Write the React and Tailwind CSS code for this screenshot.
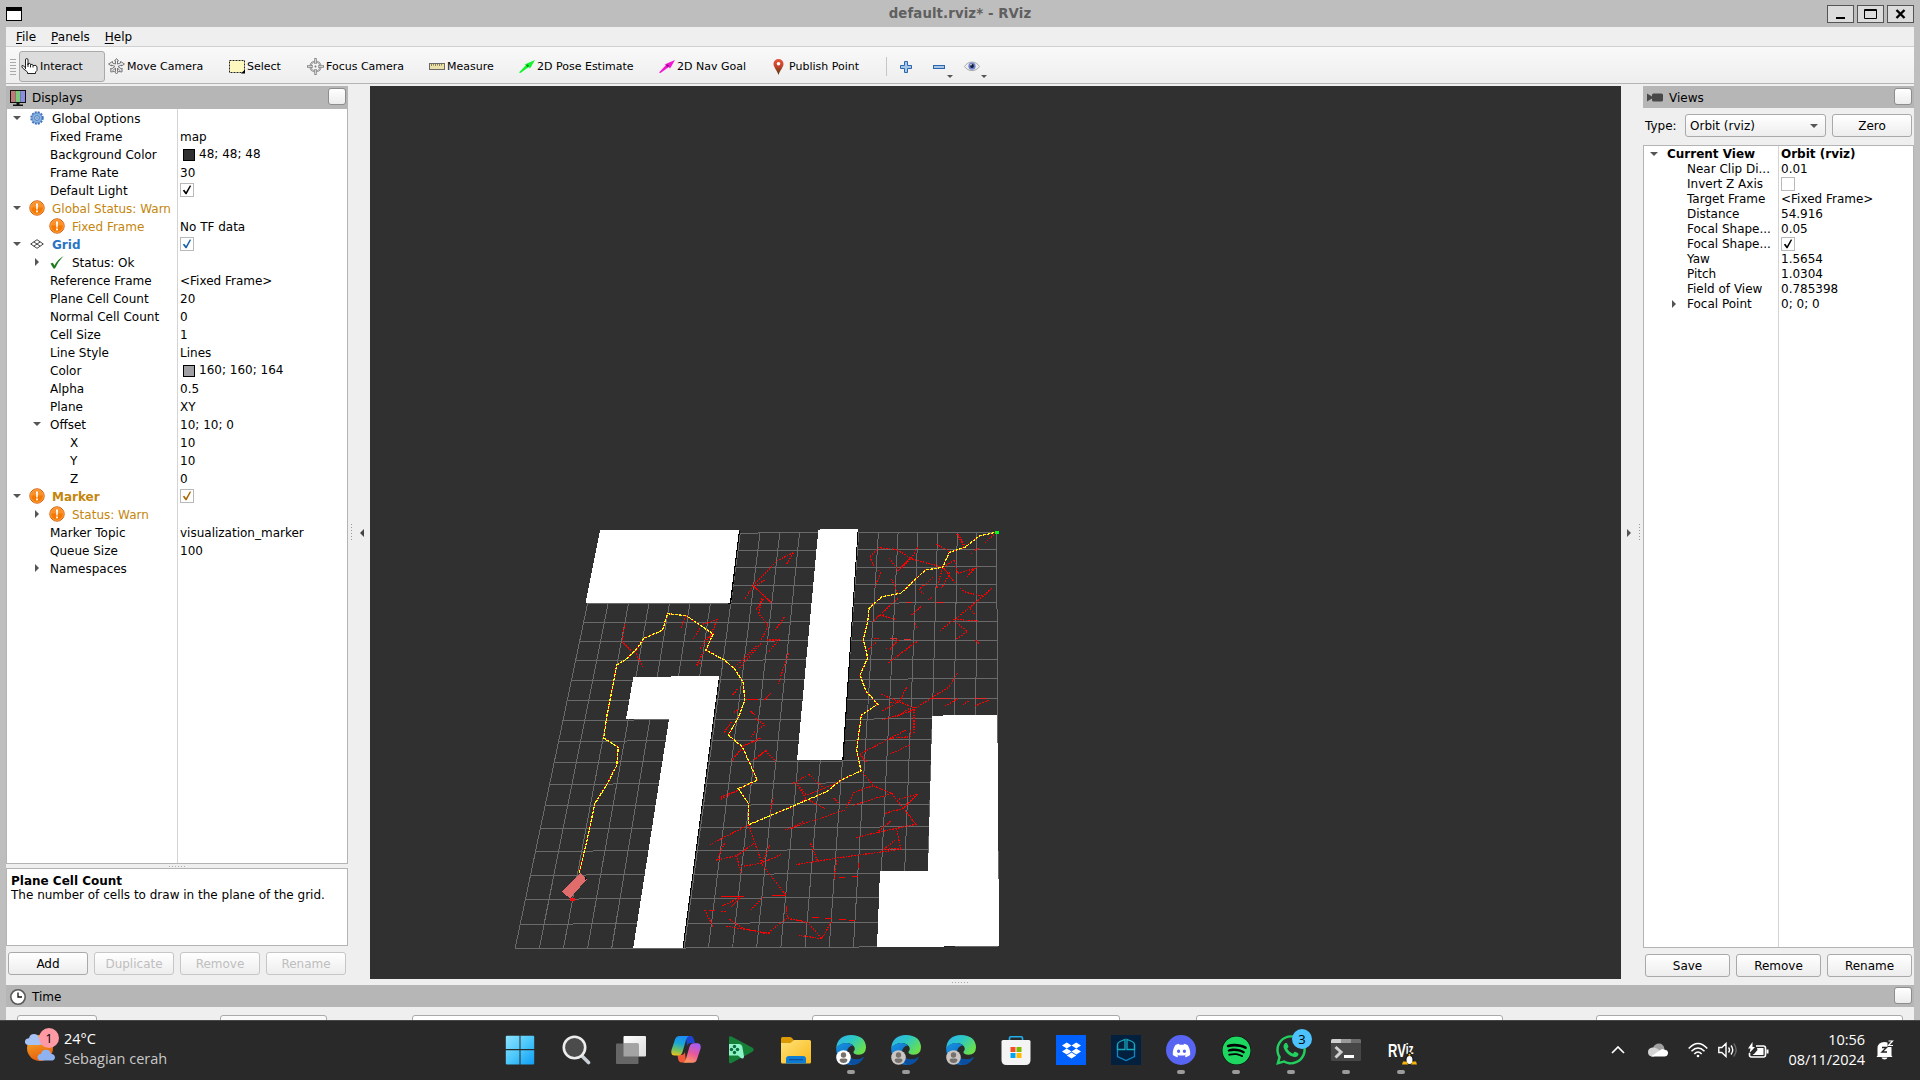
import React from "react";
import { FaDiscord, FaSpotify, FaDropbox, FaWhatsapp } from "react-icons/fa";

/* ---------- small icons ---------- */

const Hand = () => (
  <svg width="17" height="17" viewBox="0 0 17 17" fill="#fff" stroke="#222" strokeWidth="1">
    <path d="M4.500 11V2q0-1.500 1.200-1.500T7 2v5V5.500q2.500-.8 2.500 1 2.500-.8 2.500 1 4-1 4 1.500v3.500L14.500 14v1.500h-8V14L1.500 10Q.5 8.500 1 7.500 2.500 7 4.500 10z" />
    <path d="M9.500 6.500v3M12 7.500v2M7 6v3" fill="none" />
  </svg>
);
const MoveCam = () => (
  <svg width="17" height="17" viewBox="0 0 17 17" fill="#eee" stroke="#777" strokeWidth="1">
    <path d="M8.500.5l2 2.500H9.500v3l3-1V3.500l4 2.500-3 2v-1l-3.500 1.500 3.500 2.500.5-1v4l-3-.5.800-1L9.500 10v3.500h1l-2 2.500-2-2.500h1V10l-2.500 2.500.8 1-3 .5V10l.800 1L7 8.500 3.500 7v1l-3-2 4-2.500V5l3 1V3h-1z" />
  </svg>
);
const SelectIcon = () => (
  <svg width="16" height="14" viewBox="0 0 16 14">
    <rect x=".5" y=".5" width="15" height="12" fill="#fdf8bd" stroke="#222" strokeDasharray="2 1" />
    <path d="M16 9.500v4h-4z" fill="#000" />
  </svg>
);
const FocusIcon = () => (
  <svg width="17" height="17" viewBox="0 0 17 17" fill="none" stroke="#888">
    <circle cx="8.500" cy="8.500" r="5" strokeWidth="2.200" />
    <circle cx="8.500" cy="8.500" r="5" stroke="#ddd" strokeWidth=".7" />
    <path d="M8.500 0v6M8.500 11v6M0 8.500h6M11 8.500h6" strokeWidth="2.400" />
    <path d="M8.500 1v4.500M8.500 11.500V16M1 8.500h4.500M11.500 8.500H16" stroke="#e4e4e4" strokeWidth=".8" />
    <circle cx="8.500" cy="8.500" r="1" fill="#777" stroke="none" />
  </svg>
);
const Ruler = () => (
  <svg width="16" height="7" viewBox="0 0 16 7">
    <rect x=".5" y=".5" width="15" height="6" fill="#eae0a8" stroke="#6a6a6a" />
    <path d="M2.500 1v2M4.500 1v1.500M6.500 1v2M8.500 1v1.500M10.500 1v2M12.500 1v1.500" stroke="#8a835c" />
  </svg>
);
const PoseArrow = ({ color, dark }) => (
  <svg width="16" height="14" viewBox="0 0 16 14">
    <path d="M0 12.500L7 5 5.500 4.500 16 0 11 8.500 9.800 7 1.500 13z" fill={color} />
    <path d="M7 5.500l1.500-1.200 1.500 1.500L9 7.200z" fill={dark} />
  </svg>
);
const Pin = () => (
  <svg width="11" height="16" viewBox="0 0 11 16">
    <defs>
      <linearGradient id="pin" x1="0" y1="0" x2="0" y2="1">
        <stop offset="0" stopColor="#e8553a" />
        <stop offset=".45" stopColor="#c4442c" />
        <stop offset="1" stopColor="#4b3a14" />
      </linearGradient>
    </defs>
    <path d="M5.500 0a5 5 0 0 1 5 5c0 3-3.500 6.500-5 11-1.500-4.500-5-8-5-11a5 5 0 0 1 5-5z" fill="url(#pin)" />
    <circle cx="5.500" cy="4.700" r="1.800" fill="#fff" />
  </svg>
);
const Plus = () => (
  <svg width="12" height="12" viewBox="0 0 12 12">
    <path d="M4.500.5h3v4h4v3h-4v4h-3v-4h-4v-3h4z" fill="#a8c6e8" stroke="#2c66ac" />
  </svg>
);
const Minus = () => (
  <svg width="12" height="4" viewBox="0 0 12 4">
    <rect x=".5" y=".5" width="11" height="3" fill="#a8c6e8" stroke="#2c66ac" />
  </svg>
);
const Eye = () => (
  <svg width="16" height="11" viewBox="0 0 16 11">
    <path d="M.5 5.500C4-.5 12-.5 15.500 5.500 12 11 4 11 .5 5.500z" fill="#eee" stroke="#aaa" />
    <circle cx="8" cy="5.200" r="3.600" fill="#6f83c9" />
    <circle cx="8" cy="5" r="1.900" fill="#14183a" />
    <circle cx="7" cy="3.800" r=".8" fill="#fff" />
  </svg>
);
const Caret = () => (
  <svg width="6" height="3" viewBox="0 0 6 3"><path d="M0 0h6L3 3z" fill="#555" /></svg>
);
const Monitor = () => (
  <svg width="16" height="16" viewBox="0 0 16 16">
    <rect x="0" y="0" width="16" height="13" fill="#111" />
    <rect x="1" y="1" width="4.700" height="11" fill="#c07878" />
    <rect x="5.700" y="1" width="4.600" height="11" fill="#7cc87c" />
    <rect x="10.300" y="1" width="4.700" height="11" fill="#8d8de0" />
    <path d="M6.500 13h3v1.500h3.500V16H3v-1.500h3.500z" fill="#111" />
  </svg>
);
const CamIcon = () => (
  <svg width="16" height="9" viewBox="0 0 16 9" fill="#474747">
    <path d="M0 .5l5 3V2q0-1.500 1.500-1.500h8Q16 .5 16 2v5q0 1.500-1.500 1.500h-8Q5 8.500 5 7V5.500l-5 3z" />
  </svg>
);
const ClockIcon = () => (
  <svg width="16" height="16" viewBox="0 0 16 16">
    <circle cx="8" cy="8" r="7.200" fill="#fff" stroke="#5a5a5a" strokeWidth="1.600" />
    <path d="M8 3.500V8h4" fill="none" stroke="#111" strokeWidth="1.300" />
  </svg>
);
const Gear = () => (
  <svg width="14" height="14" viewBox="0 0 14 14">
    <circle cx="7" cy="7" r="5.800" fill="none" stroke="#3f72b8" strokeWidth="1.800" strokeDasharray="2 1.040" />
    <circle cx="7" cy="7" r="5" fill="#8db3e0" stroke="#3f78c0" strokeWidth=".8" />
    <circle cx="7" cy="7" r="2.400" fill="#b5cdec" stroke="#3f78c0" strokeWidth=".9" />
    <circle cx="7" cy="7" r=".8" fill="#3f78c0" />
  </svg>
);
const Warn = () => (
  <svg width="16" height="16" viewBox="0 0 16 16">
    <circle cx="8" cy="8" r="7.200" fill="#f57900" stroke="#d35f0a" strokeWidth="1" />
    <circle cx="8" cy="8" r="6.300" fill="none" stroke="#fcaf5e" strokeWidth=".8" />
    <path d="M1.800 7.500a6.200 6.200 0 0 1 12.400 0z" fill="#fb9a3c" opacity=".7" />
    <path d="M7 3.500h2L8.700 9.500H7.300z" fill="#fff" />
    <rect x="7.100" y="10.500" width="1.800" height="1.800" fill="#fff" />
  </svg>
);
const GridIcon = () => (
  <svg width="14" height="10" viewBox="0 0 14 10" fill="none" stroke="#444" strokeWidth="1">
    <path d="M7 .7L13.300 5 7 9.300.7 5zM3.800 2.900l6.400 4.300M10.200 2.900L3.800 7.200" />
  </svg>
);
const OkIcon = () => (
  <svg width="14" height="13" viewBox="0 0 14 13">
    <path d="M.5 7.500l2.300-.8 1.700 2.800Q7.500 3.500 13.500 0 8 5.500 5 12.500H3.500z" fill="#1d7a1d" />
  </svg>
);
const Down = () => <svg width="8" height="4" viewBox="0 0 8 4"><path d="M0 0h8L4 4z" fill="#555" /></svg>;
const Right = () => <svg width="4" height="8" viewBox="0 0 4 8"><path d="M0 0v8l4-4z" fill="#555" /></svg>;
const Left = () => <svg width="4" height="8" viewBox="0 0 4 8"><path d="M4 0v8L0 4z" fill="#444" /></svg>;

function Check({ color, on = true }) {
  return (
    <span className="mb-[2px] flex h-[14px] w-[14px] items-center justify-center border border-[#b9b9b9] bg-white">
      {on && (
        <svg width="10" height="10" viewBox="0 0 10 10">
          <path d="M.8 5.500l1.500-.8 1.700 2.300L7.800.5 9.200.8 4.600 9.300H3.500z" fill={color} />
        </svg>
      )}
    </span>
  );
}

/* ---------- shared widgets ---------- */

const BTN = "flex items-center justify-center rounded-[3px] border bg-gradient-to-b from-white to-[#ededed] text-[12px] leading-none";

function Button({ children, className = "", disabled }) {
  return (
    <div className={`${BTN} h-[23px] ${disabled ? "border-[#c6c6c6] text-[#bebebe]" : "border-[#a9a9a9] text-black"} ${className}`}>
      {children}
    </div>
  );
}

function FloatBox() {
  return <div className="mb-[2px] h-[17px] w-[18px] shrink-0 rounded-[3px] border border-[#8d8d8d] bg-gradient-to-b from-white to-[#ececec]" />;
}

const ICONS = { gear: Gear, warn: Warn, grid: GridIcon, ok: OkIcon };
const PAD = { 0: "w-[6px]", 1: "w-[26px]", 2: "w-[46px]" };

/* d: depth, a: arrow, i: icon, t: label, v: value, c: label colour, sw: swatch, ck: check colour */
const DISPLAY_ROWS = [
  { d: 0, a: "v", i: "gear", t: "Global Options" },
  { d: 1, t: "Fixed Frame", v: "map" },
  { d: 1, t: "Background Color", v: "48; 48; 48", sw: "#303030" },
  { d: 1, t: "Frame Rate", v: "30" },
  { d: 1, t: "Default Light", ck: "#000" },
  { d: 0, a: "v", i: "warn", t: "Global Status: Warn", c: "text-[#c4860c]" },
  { d: 1, i: "warn", t: "Fixed Frame", v: "No TF data", c: "text-[#c4860c]" },
  { d: 0, a: "v", i: "grid", t: "Grid", c: "font-bold text-[#2b74c5]", ck: "#1560a8" },
  { d: 1, a: ">", i: "ok", t: "Status: Ok" },
  { d: 1, t: "Reference Frame", v: "<Fixed Frame>" },
  { d: 1, t: "Plane Cell Count", v: "20" },
  { d: 1, t: "Normal Cell Count", v: "0" },
  { d: 1, t: "Cell Size", v: "1" },
  { d: 1, t: "Line Style", v: "Lines" },
  { d: 1, t: "Color", v: "160; 160; 164", sw: "#a0a0a4" },
  { d: 1, t: "Alpha", v: "0.5" },
  { d: 1, t: "Plane", v: "XY" },
  { d: 1, a: "v", t: "Offset", v: "10; 10; 0" },
  { d: 2, t: "X", v: "10" },
  { d: 2, t: "Y", v: "10" },
  { d: 2, t: "Z", v: "0" },
  { d: 0, a: "v", i: "warn", t: "Marker", c: "font-bold text-[#c4860c]", ck: "#a66a00" },
  { d: 1, a: ">", i: "warn", t: "Status: Warn", c: "text-[#c4860c]" },
  { d: 1, t: "Marker Topic", v: "visualization_marker" },
  { d: 1, t: "Queue Size", v: "100" },
  { d: 1, a: ">", t: "Namespaces" },
];

function DisplayRow({ r }) {
  const Icon = r.i && ICONS[r.i];
  return (
    <div className="flex h-[18px] text-[12px] leading-[18px] whitespace-nowrap">
      <div className="flex w-[170px] shrink-0">
        <span className={`${PAD[r.d]} shrink-0`} />
        <span className="flex w-[8px] shrink-0 items-center justify-center pb-[2px]">{r.a === "v" ? <Down /> : r.a === ">" ? <Right /> : null}</span>
        <span className="w-[8px] shrink-0" />
        {Icon && <span className="mr-[7px] flex w-[16px] shrink-0 items-center justify-center pb-[2px]"><Icon /></span>}
        <span className={`${Icon ? "" : "-ml-[1px] pl-[2px]"} ${r.c || ""}`}>{r.t}</span>
      </div>
      <div className="flex items-center pl-[3px]">
        {r.ck && <Check color={r.ck} />}
        {r.sw && <span className="mr-[4px] mb-[1px] ml-[3px] h-[12px] w-[12px] border border-black" style={{ background: r.sw }} />}
        <span className={r.sw ? "-mt-[2px]" : ""}>{r.v}</span>
      </div>
    </div>
  );
}

const VIEW_ROWS = [
  { t: "Current View", v: "Orbit (rviz)", head: true },
  { t: "Near Clip Di...", v: "0.01" },
  { t: "Invert Z Axis", box: true },
  { t: "Target Frame", v: "<Fixed Frame>" },
  { t: "Distance", v: "54.916" },
  { t: "Focal Shape...", v: "0.05" },
  { t: "Focal Shape...", box: true, on: true },
  { t: "Yaw", v: "1.5654" },
  { t: "Pitch", v: "1.0304" },
  { t: "Field of View", v: "0.785398" },
  { t: "Focal Point", v: "0; 0; 0", a: true },
];

function ViewRow({ r }) {
  return (
    <div className={`flex h-[15px] text-[12px] leading-[15px] whitespace-nowrap ${r.head ? "font-bold" : ""}`}>
      <div className="flex w-[134px] shrink-0">
        {r.head ? (
          <span className="flex w-[23px] items-center pb-[1px] pl-[6px]"><Down /></span>
        ) : (
          <span className="flex w-[43px] items-center pb-[1px] pl-[28px]">{r.a && <Right />}</span>
        )}
        <span>{r.t}</span>
      </div>
      <div className="flex items-center pl-[3px]">
        {r.box ? <Check color="#000" on={!!r.on} /> : r.v}
      </div>
    </div>
  );
}

/* ---------- 3D scene ---------- */

const GRID = Array.from({ length: 21 }, (_, i) => i);
const ROW_Y = [949, 924.3, 899.3, 875.3, 851.3, 828.7, 806, 784.3, 762.3, 741.3, 720.3, 700.3, 680.3, 660.7, 641.7, 622.7, 604, 585.7, 568, 550.7, 533.4];

const ROUTE =
  "579.3,872.7 584,853 589,831.7 594.7,804 607.7,783 616.7,765.7 618.3,747.3 603.7,738 606.7,716.7 610.7,696.7 616.7,665 625,660 631.7,654 638.3,646.7 644,638.3 662.3,630.3 667.7,613.7 686,615.7 713.3,634 705.7,650 724.3,660 735,669.3 743.3,682.7 744.7,700.7 738.7,716.7 728.3,735 742.3,746.7 757.3,780 738.3,788.7 748.3,803.3 748.7,824.7 793.3,806 827.3,791.3 840,780.7 861,770.7 856.7,750 859.3,730 861.3,715 877.7,704.3 866,691 860,675.3 867.7,657.7 863.3,640 867.7,621.7 869,608.3 881.7,596.7 900.7,593.3 925.3,570 942.7,567.3 949.3,552.3 965,547.3 979.3,536 996,532.3";

/* Tree branches, in thirds of a pixel from each region's own origin. */
const BRANCHES_WEST =
  "M344 313L337 365L362 391M378 400L402 447M385 382L372 398M528 287L512 328M575 318L550 356M570 316L622 298L600 350L570 385M610 342L585 360M560 436L575 405L585 392M560 436L574 428M682 507L667 527M683 569L672 577M722 575L732 582M665 605L642 638M752 655L700 678L666 722M770 690L732 718M722 652L736 638M742 780L632 838M632 832L690 808M716 914L601 973M716 914L755 1028M644 970L620 1020L680 1007L733 970M680 1007L692 1058M692 1040L752 1030L780 1018M584 1170L610 1222M596 1171H614M636 1158L690 1132M664 1160L690 1134M722 1171L760 1130M658 1198L705 1228M648 1219L705 1228L780 1240M634 1174H650";
const BRANCHES_NORTH =
  "M310 98L262 122L190 196L243 248M310 98L288 135M190 196L164 240M225 180L196 198M215 235L206 282L235 315L213 362M283 292L256 330M220 238L198 270M213 370L148 445M230 360H266L234 398M200 378L130 446M295 400L278 450L266 492M222 540L245 517M180 573L194 583M196 595L224 614L208 627M188 645L196 630M204 655L214 655M137 515L127 527M540 110L565 83L620 88L663 116L625 152M540 110L550 137M598 114L625 152M683 82L663 116L758 142M565 150L571 160L555 200M605 178L625 222M738 72L780 95M805 42L826 82M800 42L822 80M918 37L882 72M866 85L852 92M845 99L845 102M793 120L760 142L795 190M758 142L740 205M730 170L700 200M706 150L672 182M780 158L755 205M803 160L855 145L832 170M793 120L803 162M700 195L688 208L700 222M810 205L830 218L878 228M905 205L840 262L750 332M880 228L862 242M835 258L855 285M793 298L865 303M725 233L712 240M693 260L665 285M676 310L683 327M800 308L832 335L797 358M857 360L869 372M625 235L545 307M578 288L618 298M560 290L582 285M535 388L560 365M590 388L588 380M680 365L595 428M553 355H568M600 355L625 360L600 388M802 460L778 500L660 575L575 600M573 523L672 563V640M650 502L628 545L575 573M658 565L620 592M660 575L672 565M805 535L762 560M835 543L820 553M897 540L850 560M600 548H628M664 650L598 655";
const BRANCHES_SOUTH =
  "M648 0L510 72M658 45L602 72M662 0L660 18M510 72L530 98M513 122L550 167L605 190L640 235L683 192L625 208M550 167L492 188L465 240L285 300M605 190L490 226M683 192L650 222M640 235L585 250M645 240L677 283L620 295L632 355L582 358L615 330M620 295L560 308L496 323M602 274L560 308M632 358L440 384L318 404M440 390L432 446M362 340L382 392M340 275L305 295M357 133L402 175L350 195L318 158L305 160M357 133L320 155M318 158L348 206L405 236M348 206L300 235M448 155L402 175M430 203L448 222M250 203L240 250M287 494L215 402M290 548L292 563L354 578L396 626L424 575M292 563L232 611L162 597L118 568M300 568L340 574M396 626L328 616M210 25L165 45M227 62L258 95M227 62L195 88M272 374L212 400M240 345L215 400";

function Scene() {
  return (
    <svg className="block h-[893px] w-[1251px]" viewBox="370 86 1251 893" shapeRendering="crispEdges">
      <rect x="370" y="86" width="1251" height="893" fill="#303030" />
      <g stroke="#6a6a6b" strokeWidth="1">
        {GRID.map((i) => (
          <line key={"c" + i} x1={515 + i * 24.17} y1={949 - i * 0.14} x2={602.3 + i * 19.72} y2={533.4 - i * 0.05} />
        ))}
        {GRID.map((i) => {
          const t = (949 - ROW_Y[i]) / 416;
          return <line key={"r" + i} x1={515 + 87 * t} y1={ROW_Y[i]} x2={998.5 - 1.5 * t} y2={ROW_Y[i] - 2.8 + 1.8 * t} />;
        })}
      </g>
      <g fill="#000">
        <path d="M737 531h3l-9 73h-3z" />
        <path d="M856 530h2.500l-15 230h-2.500z" />
        <path d="M717 677h2.500l-36 271h-3z" />
      </g>
      <g fill="#fff">
        <path d="M600 530.500L602 530H739L730 602.500H585.700z" />
        <path d="M818.300 530L821 529H857.700L842.300 760H797z" />
        <path d="M633.300 677L671 676.500V676H719L682.600 947.500H633.300L669 719.300H626z" />
        <path d="M932.300 716H943V715H997.300L999 946.300H944V947H877L880 871H928z" />
      </g>
      <path d="M944 946.500H955" stroke="#222" strokeWidth="1" />
      <g fill="none" stroke="#ff0000" strokeWidth="3.600" strokeDasharray="5 3.500">
        <path transform="translate(510 520) scale(.33333)" d={BRANCHES_WEST} />
        <path transform="translate(690 520) scale(.33333)" d={BRANCHES_NORTH} />
        <path transform="translate(690 730) scale(.33333)" d={BRANCHES_SOUTH} />
      </g>
      <g fill="none" stroke="#ff0000" strokeWidth="1">
        <path d="M721 896.500H744M772 895.500H786M753.500 586L771 602.500M622 642L631 651M764.500 700L771 693M747 699.500H758M748.500 804V824M839 877.500H845M852 876.500H858M812 917.500H819M825 918.500H832M839 919.500H846M849 920.500H855M786.500 906V912M858.500 863V868M898 571L911 557M709 910.500H715" />
        <path d="M932 698.500H951M974 698.500H987M906 602.500H912M935 602.500H944M904 639.500H911M890 638.500H897" stroke="#e23030" />
        <polyline points={ROUTE} strokeWidth="1.150" />
        <polyline points={ROUTE} stroke="#ffff1a" strokeWidth="1.250" strokeDasharray="3 1" />
      </g>
      <rect x="995" y="531" width="4" height="3" fill="#00ff1a" />
      <path d="M580.500 873L587 879L570 898.500L562 892z" fill="#e06c6c" />
      <path d="M585 876l2.500 3-3 1z" fill="#111" />
      <path d="M570 898h5v3h-5z" fill="#ff0d0d" />
    </svg>
  );
}

/* ---------- window parts ---------- */

function TitleBar() {
  return (
    <div className="flex h-[27px] shrink-0 items-center">
      <div className="w-[200px]">
        <div className="h-[14px] w-[16px] border border-t-4 border-black bg-white" />
      </div>
      <div className="flex-1 pt-[1px] text-center text-[13.300px] font-bold tracking-[0.100px] text-[#5f5f5f]">default.rviz* - RViz</div>
      <div className="flex w-[200px] justify-end gap-[3px]">
        {["min", "max", "close"].map((k) => (
          <div key={k} className="flex h-[18px] w-[27px] items-center justify-center border border-[#555] bg-[#dcdcdc]">
            <svg width="13" height="10" viewBox="0 0 13 10" fill="none" stroke="#000">
              {k === "min" && <path d="M2 9h9" strokeWidth="2" />}
              {k === "max" && <path d="M.5.5h12v9H.5zM.5 1.500h12" strokeWidth="1" />}
              {k === "close" && <path d="M2.500 1l8 8M10.500 1l-8 8" strokeWidth="2.400" />}
            </svg>
          </div>
        ))}
      </div>
    </div>
  );
}

function Tool({ icon, label, className = "" }) {
  return (
    <div className={`flex shrink-0 items-center ${className}`}>
      {icon}
      <span className="ml-[2px] pt-[2px]">{label}</span>
    </div>
  );
}

function Toolbar() {
  return (
    <div className="flex h-[38px] shrink-0 items-center border-t border-b border-t-[#d0d0d0] border-b-[#b4b4b4] bg-gradient-to-b from-[#f9f9f9] to-[#eeeeee] pt-[3px] text-[11px] whitespace-nowrap">
      <div className="ml-[4px] h-[18px] w-[6px] bg-[radial-gradient(#aaa_0.600px,transparent_0.800px)] bg-[length:2px_3px]" />
      <div className="ml-[3px] flex h-[31px] w-[86px] items-center rounded-[3px] border border-[#aaa] bg-[#dcdcdc] pl-[1px]">
        <Tool icon={<Hand />} label="Interact" className="w-full" />
      </div>
      <Tool icon={<MoveCam />} label="Move Camera" className="ml-[3px] w-[121px]" />
      <Tool icon={<SelectIcon />} label="Select" className="w-[78px]" />
      <Tool icon={<FocusIcon />} label="Focus Camera" className="w-[122px]" />
      <Tool icon={<Ruler />} label="Measure" className="w-[90px]" />
      <Tool icon={<PoseArrow color="#12f52c" dark="#0a8f1c" />} label="2D Pose Estimate" className="w-[140px]" />
      <Tool icon={<PoseArrow color="#f414d4" dark="#8a0a78" />} label="2D Nav Goal" className="w-[114px]" />
      <Tool icon={<Pin />} label="Publish Point" className="w-[113px] gap-[3px]" />
      <div className="h-[19px] w-px bg-[#c6c6c6]" />
      <div className="ml-[13px] w-[33px]"><Plus /></div>
      <div className="flex w-[31px] items-center"><Minus /><span className="mt-[20px] ml-[2px]"><Caret /></span></div>
      <div className="flex items-center"><Eye /><span className="mt-[20px] ml-[1px]"><Caret /></span></div>
    </div>
  );
}

function DisplaysPanel() {
  return (
    <div className="flex w-[342px] shrink-0 flex-col">
      <div className="flex h-[23px] items-center bg-[#b6b6b6] pr-[2px] pl-[4px] text-[12px]">
        <Monitor />
        <span className="ml-[6px] flex-1 pt-[1px]">Displays</span>
        <FloatBox />
      </div>
      <div className="h-[755px] border border-t-0 border-[#b4b4b4] bg-[linear-gradient(to_right,#fff_170px,#d4d4d4_170px,#d4d4d4_171px,#fff_171px)] pt-px">
        {DISPLAY_ROWS.map((r, i) => <DisplayRow key={i} r={r} />)}
      </div>
      <div className="flex h-[4px] items-center justify-center">
        <div className="h-px w-[17px] bg-[repeating-linear-gradient(to_right,#aaa_0_1px,transparent_1px_3px)]" />
      </div>
      <div className="h-[78px] border border-[#b4b4b4] bg-white pt-[5px] pl-[4px] text-[12px] leading-[14px]">
        <div className="font-bold">Plane Cell Count</div>
        <div>The number of cells to draw in the plane of the grid.</div>
      </div>
      <div className="mt-[6px] flex justify-between px-[2px]">
        <Button className="w-[80px]">Add</Button>
        <Button className="w-[80px]" disabled>Duplicate</Button>
        <Button className="w-[80px]" disabled>Remove</Button>
        <Button className="w-[80px]" disabled>Rename</Button>
      </div>
    </div>
  );
}

function ViewsPanel() {
  return (
    <div className="flex w-[271px] shrink-0 flex-col">
      <div className="flex h-[22px] items-center bg-[#b6b6b6] pr-[2px] pl-[4px] text-[12px]">
        <CamIcon />
        <span className="ml-[6px] flex-1 pt-[2px]">Views</span>
        <FloatBox />
      </div>
      <div className="mt-[6px] flex items-center pr-[2px] pl-[2px] text-[12px]">
        <span className="w-[40px]">Type:</span>
        <div className="flex h-[23px] w-[141px] items-center justify-between rounded-[3px] border border-[#a9a9a9] bg-gradient-to-b from-white to-[#ededed] pr-[7px] pl-[4px]">
          <span>Orbit (rviz)</span>
          <Down />
        </div>
        <Button className="ml-[6px] flex-1">Zero</Button>
      </div>
      <div className="mt-[8px] h-[803px] border border-[#b4b4b4] bg-[linear-gradient(to_right,#fff_134px,#d4d4d4_134px,#d4d4d4_135px,#fff_135px)] pt-px">
        {VIEW_ROWS.map((r, i) => <ViewRow key={i} r={r} />)}
      </div>
      <div className="mt-[6px] flex justify-between px-[2px]">
        <Button className="w-[85px]">Save</Button>
        <Button className="w-[85px]">Remove</Button>
        <Button className="w-[85px]">Rename</Button>
      </div>
    </div>
  );
}

const Dots = () => <div className="h-[17px] w-px bg-[repeating-linear-gradient(to_bottom,#999_0_1px,transparent_1px_3px)]" />;

function TimePanel() {
  return (
    <div className="flex h-[35px] shrink-0 flex-col overflow-hidden">
      <div className="flex h-[22px] shrink-0 items-center bg-[#b6b6b6] pr-[2px] pl-[4px] text-[12px]">
        <span className="mt-[2px]"><ClockIcon /></span>
        <span className="ml-[6px] flex-1 pt-[2px]">Time</span>
        <FloatBox />
      </div>
      <div className="mt-[8px] flex pl-[11px]">
        <div className="h-[23px] w-[80px] shrink-0 rounded-[3px] border border-[#a9a9a9] bg-[#f9f9f9]" />
        <div className="ml-[123px] h-[23px] w-[107px] shrink-0 rounded-[3px] border border-[#a9a9a9] bg-[#f9f9f9]" />
        <div className="ml-[85px] h-[23px] w-[307px] shrink-0 rounded-[3px] border border-[#a9a9a9] bg-white" />
        <div className="ml-[93px] h-[23px] w-[308px] shrink-0 rounded-[3px] border border-[#a9a9a9] bg-white" />
        <div className="ml-[76px] h-[23px] w-[307px] shrink-0 rounded-[3px] border border-[#a9a9a9] bg-white" />
        <div className="ml-[93px] h-[23px] w-[307px] shrink-0 rounded-[3px] border border-[#a9a9a9] bg-white" />
      </div>
    </div>
  );
}

/* ---------- taskbar ---------- */

const WindowsLogo = () => (
  <svg className="-ml-[3px]" width="30" height="30" viewBox="0 0 30 30">
    <defs>
      <linearGradient id="win" x1="0" y1="0" x2="1" y2="1">
        <stop offset="0" stopColor="#8fe3ff" /><stop offset=".5" stopColor="#4cc8fb" /><stop offset="1" stopColor="#0f9df5" />
      </linearGradient>
    </defs>
    <path d="M1.500 .8H14.500V14H.8V1.500zM15.500 .8H28.500l.7.700V14H15.500zM.8 15.300H14.500V29.500H1.500l-.7-.7zM15.500 15.300H29.200v13.500l-.7.700H15.500z" fill="url(#win)" />
  </svg>
);
const SearchLogo = () => (
  <svg width="30" height="30" viewBox="0 0 30 30" fill="none">
    <path d="M20.500 20.500l7 7" stroke="#c9cfd6" strokeWidth="3.600" strokeLinecap="round" />
    <circle cx="13.500" cy="12.500" r="10.700" fill="#4b4b4b" stroke="#ededed" strokeWidth="2.600" />
  </svg>
);
const TaskView = () => (
  <svg width="30" height="30" viewBox="0 0 30 30">
    <defs><linearGradient id="tv" x1="0" y1="0" x2="1" y2="1"><stop offset="0" stopColor="#fff" /><stop offset="1" stopColor="#dcdcdc" /></linearGradient></defs>
    <rect x="7.500" y="1" width="22.500" height="20.500" rx="1" fill="url(#tv)" />
    <rect x="0" y="8.500" width="22.500" height="20.500" rx="1" fill="#666" />
    <path d="M7.500 8.500h15v13h-15z" fill="#a3a3a3" />
  </svg>
);
const Copilot = () => (
  <svg width="30" height="30" viewBox="0 0 30 30">
    <defs>
      <linearGradient id="cpa" x1=".4" y1="0" x2=".2" y2="1">
        <stop offset="0" stopColor="#1b8ef2" /><stop offset=".35" stopColor="#18a7d8" /><stop offset=".7" stopColor="#6fc060" /><stop offset="1" stopColor="#f3c220" />
      </linearGradient>
      <linearGradient id="cpb" x1=".7" y1="0" x2=".3" y2="1">
        <stop offset="0" stopColor="#a35cf5" /><stop offset=".5" stopColor="#e8579c" /><stop offset="1" stopColor="#ff9a5c" />
      </linearGradient>
    </defs>
    <path d="M15 1h4.500q2.500 0 3.300 3l1.200 4h-4q-3 0-4 3z" fill="#1c45d0" />
    <path d="M15 27.500h-4.500q-2.500 0-3.300-3L6.500 20H10q3 0 4-3z" fill="#f2583a" />
    <path d="M8.500 1H18q-2 .5-3 4l-3.500 12q-1 3.500-4.500 3.500H3.500Q-.5 20.500.5 15L4 4.500Q5 1 8.500 1z" fill="url(#cpa)" />
    <path d="M21.500 27.800H12q2-.5 3-4l3.500-12q1-3.500 4.500-3.500h3.500q4 0 3 5.500L26 24.300q-1 3.500-4.500 3.500z" fill="url(#cpb)" />
  </svg>
);
const PlayGames = () => (
  <svg width="30" height="30" viewBox="0 0 30 30">
    <path d="M3 2.500Q3 .5 5.500 1.500L26 12.500q3.500 2 0 4.500L5.500 28Q3 29 3 27z" fill="#178038" />
    <path d="M3 9h10.500q2 0 2.800 2.500L18 21.500q0 3-3 1.500l-3-2.500H3z" fill="#8ff5c8" />
    <g fill="#0e6b3c"><circle cx="8.500" cy="11.500" r="1.700" /><circle cx="8.500" cy="17.500" r="1.700" /><circle cx="5.500" cy="14.500" r="1.700" /><circle cx="11.500" cy="14.500" r="1.700" /></g>
  </svg>
);
const Explorer = () => (
  <svg width="30" height="30" viewBox="0 0 30 30">
    <defs><linearGradient id="fe" x1="0" y1="0" x2="1" y2="1"><stop offset="0" stopColor="#ffe27a" /><stop offset="1" stopColor="#f8b818" /></linearGradient></defs>
    <path d="M0 3.500Q0 2 1.500 2H9q1 0 2 1l2 2.500V10H0z" fill="#dc9a04" />
    <path d="M0 8h9.500l3.500-3h15.500q1.500 0 1.500 1.500v20.500q0 1.500-1.500 1.500h-27Q0 28.500 0 27z" fill="url(#fe)" />
    <path d="M5 28.500v-4.500q0-3 3-3h14q3 0 3 3v4.500z" fill="#0f7cd4" />
    <rect x="8" y="24" width="14" height="1.300" fill="#0a539c" />
  </svg>
);
const Edge = ({ light }) => (
  <svg width="30" height="30" viewBox="0 0 30 30">
    <defs>
      <linearGradient id="eda" x1="0" y1="0" x2="1" y2=".6"><stop offset="0" stopColor="#2fb2f2" /><stop offset=".5" stopColor="#2cc8c4" /><stop offset="1" stopColor="#6be04a" /></linearGradient>
      <linearGradient id="edb" x1="0" y1="0" x2="1" y2="1"><stop offset="0" stopColor="#1694e6" /><stop offset="1" stopColor="#0c53a6" /></linearGradient>
    </defs>
    <path d="M.1 13.500Q1.500.2 15 .1 29.500.5 30 12.500q-.3 7-7.500 7.300-5.500-.3-5-3 1.700-1.500 1.200-3.800Q17.500 9 12 8 4 7.500 .1 13.500z" fill="url(#eda)" />
    <path d="M.1 13.500Q4 7.500 11.500 8q4 .5 5.500 2.500-5.500.5-6 6.500.3 7 8.500 7.500 5 .5 8.500-2.500Q23.500 30 15 30 1 29 .1 13.500z" fill="url(#edb)" />
    <path d="M11 17q.5 6 8 7.500 5 .3 9-2.800-3.500 8-11.500 8.300-6-3-5.500-13z" fill="#0b4fa0" />
    <circle cx="7.500" cy="22.500" r="7.300" fill={light ? "#fff" : "#cbc6c3"} />
    <circle cx="7.500" cy="20" r="2.700" fill="#77716e" />
    <path d="M3.500 25.500q0-2 2-2h4q2 0 2 2-1 2.500-4 2.500t-4-2.500z" fill="#77716e" />
  </svg>
);
const Store = () => (
  <svg width="30" height="30" viewBox="0 0 30 30">
    <path d="M8.500 6V3q0-1.300 1.300-1.300h10.400q1.300 0 1.300 1.300v3" fill="none" stroke="#1fb0ec" strokeWidth="1.600" />
    <path d="M.5 6.500Q.5 5 2 5h26q1.500 0 1.500 1.500V25q0 5-5 5h-19q-5 0-5-5z" fill="#f4f4f4" />
    <path d="M9.500 12h5v5h-5z" fill="#f25022" /><path d="M15.500 12h5v5h-5z" fill="#7fba00" />
    <path d="M9.500 18h5v5h-5z" fill="#00a4ef" /><path d="M15.500 18h5v5h-5z" fill="#ffb900" />
  </svg>
);
const Dropbox = () => (
  <div className="flex h-[30px] w-[30px] items-center justify-center bg-[#0061fe] text-white"><FaDropbox size={19} /></div>
);
const Shield = () => (
  <svg width="30" height="30" viewBox="0 0 30 30">
    <rect width="30" height="30" fill="#03203f" />
    <g fill="none" strokeWidth="1.300">
      <path d="M6.500 9.500v12l8.500 4 8.500-4v-12" stroke="#0e86c4" />
      <path d="M14 14.500V4.500L9 6.500q-2.500 1-2.500 3v5zM16 14.500V4.500l5 2q2.500 1 2.500 3v5z" stroke="#16a8bd" />
    </g>
  </svg>
);
const Discord = () => (
  <div className="flex h-[30px] w-[30px] items-center justify-center rounded-full bg-[#5865f2] text-white"><FaDiscord size={19} /></div>
);
const Spotify = () => (
  <div className="flex h-[29px] w-[29px] items-center justify-center rounded-full bg-black text-[#1ed760]"><FaSpotify size={29} /></div>
);
const WhatsApp = () => (
  <div className="relative flex h-[30px] w-[30px] items-center justify-center text-[#22cf5f]">
    <FaWhatsapp size={34} className="shrink-0" />
    <span className="absolute -top-[6px] left-[16px] flex h-[20px] w-[20px] items-center justify-center rounded-full bg-[#4cc2ff] text-[13px] leading-none text-black">3</span>
  </div>
);
const Terminal = () => (
  <svg width="30" height="30" viewBox="0 0 30 30">
    <rect x="0" y="4" width="30" height="22" rx="1.500" fill="#474747" />
    <path d="M0 5.500Q0 4 1.500 4H10v4H0z" fill="#cfcfcf" /><path d="M10 4h10v4H10z" fill="#9a9a9a" /><path d="M20 4h8.500Q30 4 30 5.500V8H20z" fill="#6d6d6d" />
    <path d="M4.500 12l5.500 5-5.500 5.500" fill="none" stroke="#cfcfcf" strokeWidth="3" />
    <rect x="13" y="20" width="10" height="3" fill="#fff" />
  </svg>
);
const RViz = () => (
  <div className="relative h-[30px] w-[30px]">
    <span className="absolute top-[5px] left-[2px] origin-left font-['Liberation_Sans'] text-[18px] leading-[18px] font-bold text-white [transform:scaleX(.72)]">RV<span className="align-[3px] text-[14px]">iz</span></span>
    <svg className="absolute top-[17px] left-[16px]" width="15" height="13" viewBox="0 0 15 13">
      <path d="M7.500 0q2 0 2 3 2.500 3.500 2.500 6L10.500 12h-6L3 9q0-2.500 2.500-6 0-3 2-3z" fill="#111" />
      <ellipse cx="7.500" cy="8" rx="3" ry="4" fill="#fff" />
      <circle cx="7.500" cy="2.800" r="1.100" fill="#f5b40a" />
      <path d="M1 9.500h3.500l1.500 3H0zM14 9.500h-3.500L9 12.500h6z" fill="#f5b40a" />
    </svg>
  </div>
);

const APPS = [
  [WindowsLogo], [SearchLogo], [TaskView], [Copilot], [PlayGames], [Explorer],
  [() => <Edge light />, true], [() => <Edge />, true], [() => <Edge />],
  [Store], [Dropbox], [Shield], [Discord, true], [Spotify, true], [WhatsApp, true], [Terminal, true], [RViz, true],
];

function Taskbar() {
  return (
    <div className="flex h-[60px] border-t border-[#474747] bg-[#292929] font-['Open_Sans','Noto_Sans',sans-serif] text-white">
      <div className="flex w-[493.500px] shrink-0 pl-[24px]">
        <div className="relative mt-[7px] h-[36px] w-[40px]">
          <svg width="36" height="36" viewBox="0 0 36 36">
            <defs><linearGradient id="sun" x1="0" y1="0" x2="0.300" y2="1"><stop offset="0" stopColor="#f5b52e" /><stop offset="1" stopColor="#e8600c" /></linearGradient></defs>
            <circle cx="16" cy="20" r="13" fill="url(#sun)" />
            <path d="M4.500 17q-4-.3-3.500-4 .8-2.800 4-2.800Q6 6 10 6t5 4q4 .5 4 4-.5 3-3.500 3z" fill="#a5c3f5" />
            <path d="M17 32.500q-4-.3-3.500-4 .8-2.500 3.500-2.800.8-4 5-4t5 4q4 .5 4 4-.5 2.800-3.500 2.800z" fill="#8fb3f0" />
          </svg>
          <span className="absolute top-0 left-[15px] flex h-[20px] w-[20px] items-center justify-center rounded-full bg-[#ff99a4] text-[13px] leading-none text-black">1</span>
        </div>
        <div className="mt-[8px] text-[14.500px] leading-[20px]">
          <div>24°C</div>
          <div className="text-[#c8c8c8]">Sebagian cerah</div>
        </div>
      </div>
      <div className="flex">
        {APPS.map(([Icon, running], i) => (
          <div key={i} className="flex w-[55px] flex-col items-center pt-[14px]">
            <div className="flex h-[30px] items-center"><Icon /></div>
            {running && <div className="mt-[5px] h-[4px] w-[8px] rounded-full bg-[#9b9b9b]" />}
          </div>
        ))}
      </div>
      <div className="flex flex-1 items-center justify-end pr-[26px] pb-[1px]">
        <svg width="14" height="8" viewBox="0 0 14 8" fill="none" stroke="#fff" strokeWidth="1.700"><path d="M1 7l6-6 6 6" /></svg>
        <svg className="ml-[23px]" width="20" height="14" viewBox="0 0 20 14">
          <path d="M5 5Q6.500.5 11 .5t5.500 5.500L10 9z" fill="#a0a0a0" />
          <path d="M0 9q0-4 4.500-4.500 4-.5 8 4L6 13.500H4Q0 13 0 9z" fill="#d4d4d4" />
          <path d="M3 13.500l10-7q2-1 4 .3 3.500.7 3 3.700-.5 3-3.500 3z" fill="#fff" />
        </svg>
        <svg className="ml-[20px]" width="20" height="16" viewBox="0 0 20 16" fill="none" stroke="#fff" strokeWidth="1.500">
          <path d="M.7 6.500Q10-3.500 19.300 6.500M3.500 9.200q6.500-6.500 13 0M6.300 12q3.700-3.800 7.400 0" /><circle cx="10" cy="14" r="1.300" fill="#fff" stroke="none" />
        </svg>
        <svg className="ml-[10px]" width="20" height="16" viewBox="0 0 20 16" fill="none" stroke="#fff" strokeWidth="1.400">
          <path d="M.8 5.500h3L8 1.500v13l-4.200-4h-3zM10.500 5.500q2 2.500 0 5M13 3.500q3.500 4.500 0 9" /><path d="M15.700 1.500q5 6.500 0 13" stroke="#666" />
        </svg>
        <svg className="ml-[10px]" width="21" height="17" viewBox="0 0 21 17">
          <path d="M8 4h7.500q2 0 2 2v7q0 2-2 2H3.500q-2 0-2-2v-2" fill="none" stroke="#fff" strokeWidth="1.600" />
          <path d="M9 6h6.500v7H4.500l2-1.500 3-3.500z" fill="#fff" /><rect x="18.500" y="7.500" width="2" height="4" fill="#fff" />
          <path d="M4.500 0L0 6.500h2.500L1.500 11 7 5H4.500z" fill="#fff" />
        </svg>
        <div className="ml-[20px] text-right text-[14.500px] leading-[20px] tracking-[-0.050px]">
          <div>10:56</div>
          <div>08/11/2024</div>
        </div>
        <svg className="ml-[11px]" width="18" height="20" viewBox="0 0 18 20">
          <path d="M1.500 15.500v-7Q1.500 2 8.500 2q7 0 7 6.500v7l1 1.500H.5z" fill="#fff" />
          <path d="M5.500 17.500h6q-.5 2-3 2t-3-2z" fill="#fff" />
          <path d="M6 7.500h4.500L6 12h5" fill="none" stroke="#222" strokeWidth="1.400" />
          <path d="M11.500 0H18v7h-6.500z" fill="#292929" /><path d="M12.500 1h4l-4 4.500h4.500" fill="none" stroke="#fff" strokeWidth="1.200" />
        </svg>
      </div>
    </div>
  );
}

export default function App() {
  return (
    <div className="flex h-[1080px] w-[1920px] flex-col overflow-hidden bg-[#efefef] font-['DejaVu_Sans',sans-serif] text-black">
      <div className="flex h-[1020px] flex-col bg-[#bebebe] px-[6px]">
        <TitleBar />
        <div className="flex min-h-0 flex-1 flex-col bg-[#efefef]">
          <div className="flex h-[19px] shrink-0 items-center gap-[15px] pt-[1px] pl-[10px] text-[12px]">
            <span><u className="underline-offset-2">F</u>ile</span>
            <span><u className="underline-offset-2">P</u>anels</span>
            <span><u className="underline-offset-2">H</u>elp</span>
          </div>
          <Toolbar />
          <div className="mt-[2px] flex h-[893px] shrink-0">
            <DisplaysPanel />
            <div className="flex w-[22px] shrink-0 items-center gap-[8px] pl-[3px]"><Dots /><Left /></div>
            <Scene />
            <div className="flex w-[22px] shrink-0 items-center gap-[8px] pl-[6px]"><Right /><Dots /></div>
            <ViewsPanel />
          </div>
          <div className="flex h-[6px] shrink-0 items-center justify-center">
            <div className="h-px w-[17px] bg-[repeating-linear-gradient(to_right,#aaa_0_1px,transparent_1px_3px)]" />
          </div>
          <TimePanel />
        </div>
      </div>
      <Taskbar />
    </div>
  );
}
